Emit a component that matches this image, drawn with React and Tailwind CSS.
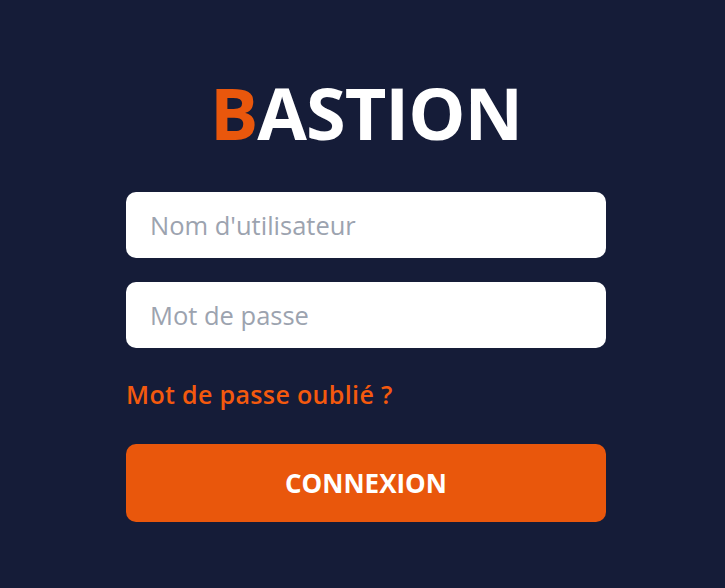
import React, { useState } from "react";

const App = () => {
  const [user, setUser] = useState("");
  const [pass, setPass] = useState("");

  return (
    <div
      className="min-h-screen w-full bg-[#151c38] flex justify-center pl-[7px]"
      style={{ fontFamily: '"Open Sans", "Noto Sans", sans-serif' }}
    >
      <div className="w-[480px] flex flex-col pt-[68px]">
        {/* Logo */}
        <h1 className="text-center text-[72px] leading-[88px] font-bold text-white tracking-[-1px]">
          <span className="text-[#e9570c]">B</span>ASTION
        </h1>

        {/* Form */}
        <div className="mt-[36px] flex flex-col gap-6">
          <input
            type="text"
            value={user}
            onChange={(e) => setUser(e.target.value)}
            placeholder="Nom d'utilisateur"
            className="h-[66px] w-full rounded-[10px] bg-white px-6 text-[25.5px] text-gray-800 placeholder:text-[#9ca3af] outline-none"
          />
          <input
            type="password"
            value={pass}
            onChange={(e) => setPass(e.target.value)}
            placeholder="Mot de passe"
            className="h-[66px] w-full rounded-[10px] bg-white px-6 text-[25.5px] text-gray-800 placeholder:text-[#9ca3af] outline-none"
          />
        </div>

        <a href="#" className="mt-[30px] text-[25px] font-semibold text-[#f4590e] leading-[32px] tracking-[0.35px]">
          Mot de passe oublié ?
        </a>

        <button className="mt-[34px] h-[78px] w-full rounded-[10px] bg-[#e9570c] text-white text-[26px] font-bold">
          CONNEXION
        </button>
      </div>
    </div>
  );
};

export default App;
